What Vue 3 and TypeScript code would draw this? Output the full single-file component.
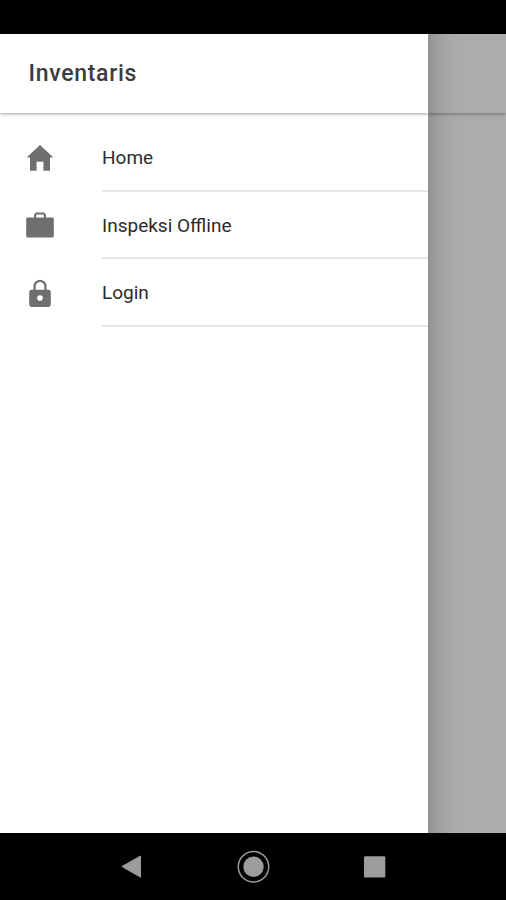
<script setup lang="ts">
interface MenuItem {
  label: string
  icon: 'home' | 'case' | 'lock'
}

const items: MenuItem[] = [
  { label: 'Home', icon: 'home' },
  { label: 'Inspeksi Offline', icon: 'case' },
  { label: 'Login', icon: 'lock' },
]
</script>

<template>
  <div class="screen">
    <div class="status-bar"></div>
    <div class="content">
      <aside class="drawer">
        <header class="toolbar"><h1 class="title">Inventaris</h1></header>
        <nav class="menu">
          <a v-for="item in items" :key="item.label" class="item">
            <svg class="icon" viewBox="0 0 32 32" aria-hidden="true">
              <path v-if="item.icon === 'home'" d="M16 3 2.7 15.4H6v13.3h6.6v-9h6.8v9H26V15.4h3.3Z" />
              <path
                v-else-if="item.icon === 'case'"
                fill-rule="evenodd"
                d="M12 3.500h8l2 2v3.100h6.500q1.300 0 1.300 1.300v17.300q0 1.300-1.300 1.300H3.500q-1.300 0-1.300-1.300V9.900q0-1.300 1.300-1.300H10V5.500ZM12.200 5.600V8.600h7.600V5.600Z"
              />
              <path
                v-else
                fill-rule="evenodd"
                d="M7.500 12.700H9.500V9.200a6.500 6.500 0 0 1 13 0v3.500h2a2.300 2.300 0 0 1 2.300 2.300v12.600a2.300 2.300 0 0 1-2.300 2.300h-17a2.300 2.300 0 0 1-2.300-2.300V15a2.300 2.300 0 0 1 2.300-2.300ZM11.700 12.700h8.600V9.200a4.300 4.300 0 0 0-8.600 0ZM16 18.300a2.800 2.800 0 1 0 0 5.600 2.800 2.800 0 0 0 0-5.600Z"
              />
            </svg>
            <span class="label">{{ item.label }}</span>
          </a>
        </nav>
      </aside>
      <div class="backdrop"><div class="page-header"></div></div>
    </div>
    <footer class="nav-bar">
      <svg class="nav-icons" viewBox="0 0 506 66" aria-hidden="true">
        <path d="M122 33.500 140.500 23V44.200Z" stroke="#9c9c9c" stroke-width="1" stroke-linejoin="round" />
        <circle cx="253.500" cy="33.700" r="15.200" fill="none" stroke="#9c9c9c" stroke-width="1.500" />
        <circle cx="253.500" cy="33.700" r="10.200" />
        <rect x="364" y="23.200" width="21.300" height="21.300" rx="1.200" />
      </svg>
    </footer>
  </div>
</template>

<style>
body {
  margin: 0;
}
</style>

<style scoped>
.screen {
  display: flex;
  flex-direction: column;
  width: 506px;
  height: 900px;
  overflow: hidden;
  background: #000;
  font-family: Roboto, 'Liberation Sans', sans-serif;
}
.status-bar {
  flex: 0 0 34px;
}
.content {
  display: flex;
  flex: 0 0 799px;
  overflow: hidden;
}
.drawer {
  flex: 0 0 428px;
  overflow: hidden;
  background: #fff;
}
.toolbar {
  display: flex;
  align-items: center;
  height: 79px;
  padding-left: 28.500px;
  box-sizing: border-box;
  box-shadow: 0 1px 3px rgba(0, 0, 0, 0.38);
}
.title {
  margin: 0;
  padding-top: 1px;
  color: #3c3c3c;
  font-size: 23px;
  font-weight: 500;
  line-height: 28px;
  letter-spacing: 0.7px;
}
.menu {
  padding-top: 11px;
}
.item {
  display: flex;
  height: 67.600px;
  align-items: center;
}
.icon {
  width: 32px;
  height: 32px;
  margin: 0 46px 0 24px;
  fill: #6f6f6f;
}
.label {
  display: flex;
  flex: 1;
  align-items: center;
  height: 100%;
  padding-top: 2px;
  box-sizing: border-box;
  border-bottom: 2px solid #e5e5e5;
  color: #2b2b2b;
  font-size: 19px;
}
.backdrop {
  flex: 1;
  overflow: hidden;
  background: linear-gradient(90deg, #919191 0, #989898 5px, #a0a0a0 12px, #a8a8a8 20px, #acacac 33px);
}
.page-header {
  height: 79px;
  box-shadow: 0 1px 3px rgba(0, 0, 0, 0.36);
}
.nav-bar {
  flex: 0 0 67px;
}
.nav-icons {
  display: block;
  width: 506px;
  height: 66px;
  fill: #9c9c9c;
}
</style>
